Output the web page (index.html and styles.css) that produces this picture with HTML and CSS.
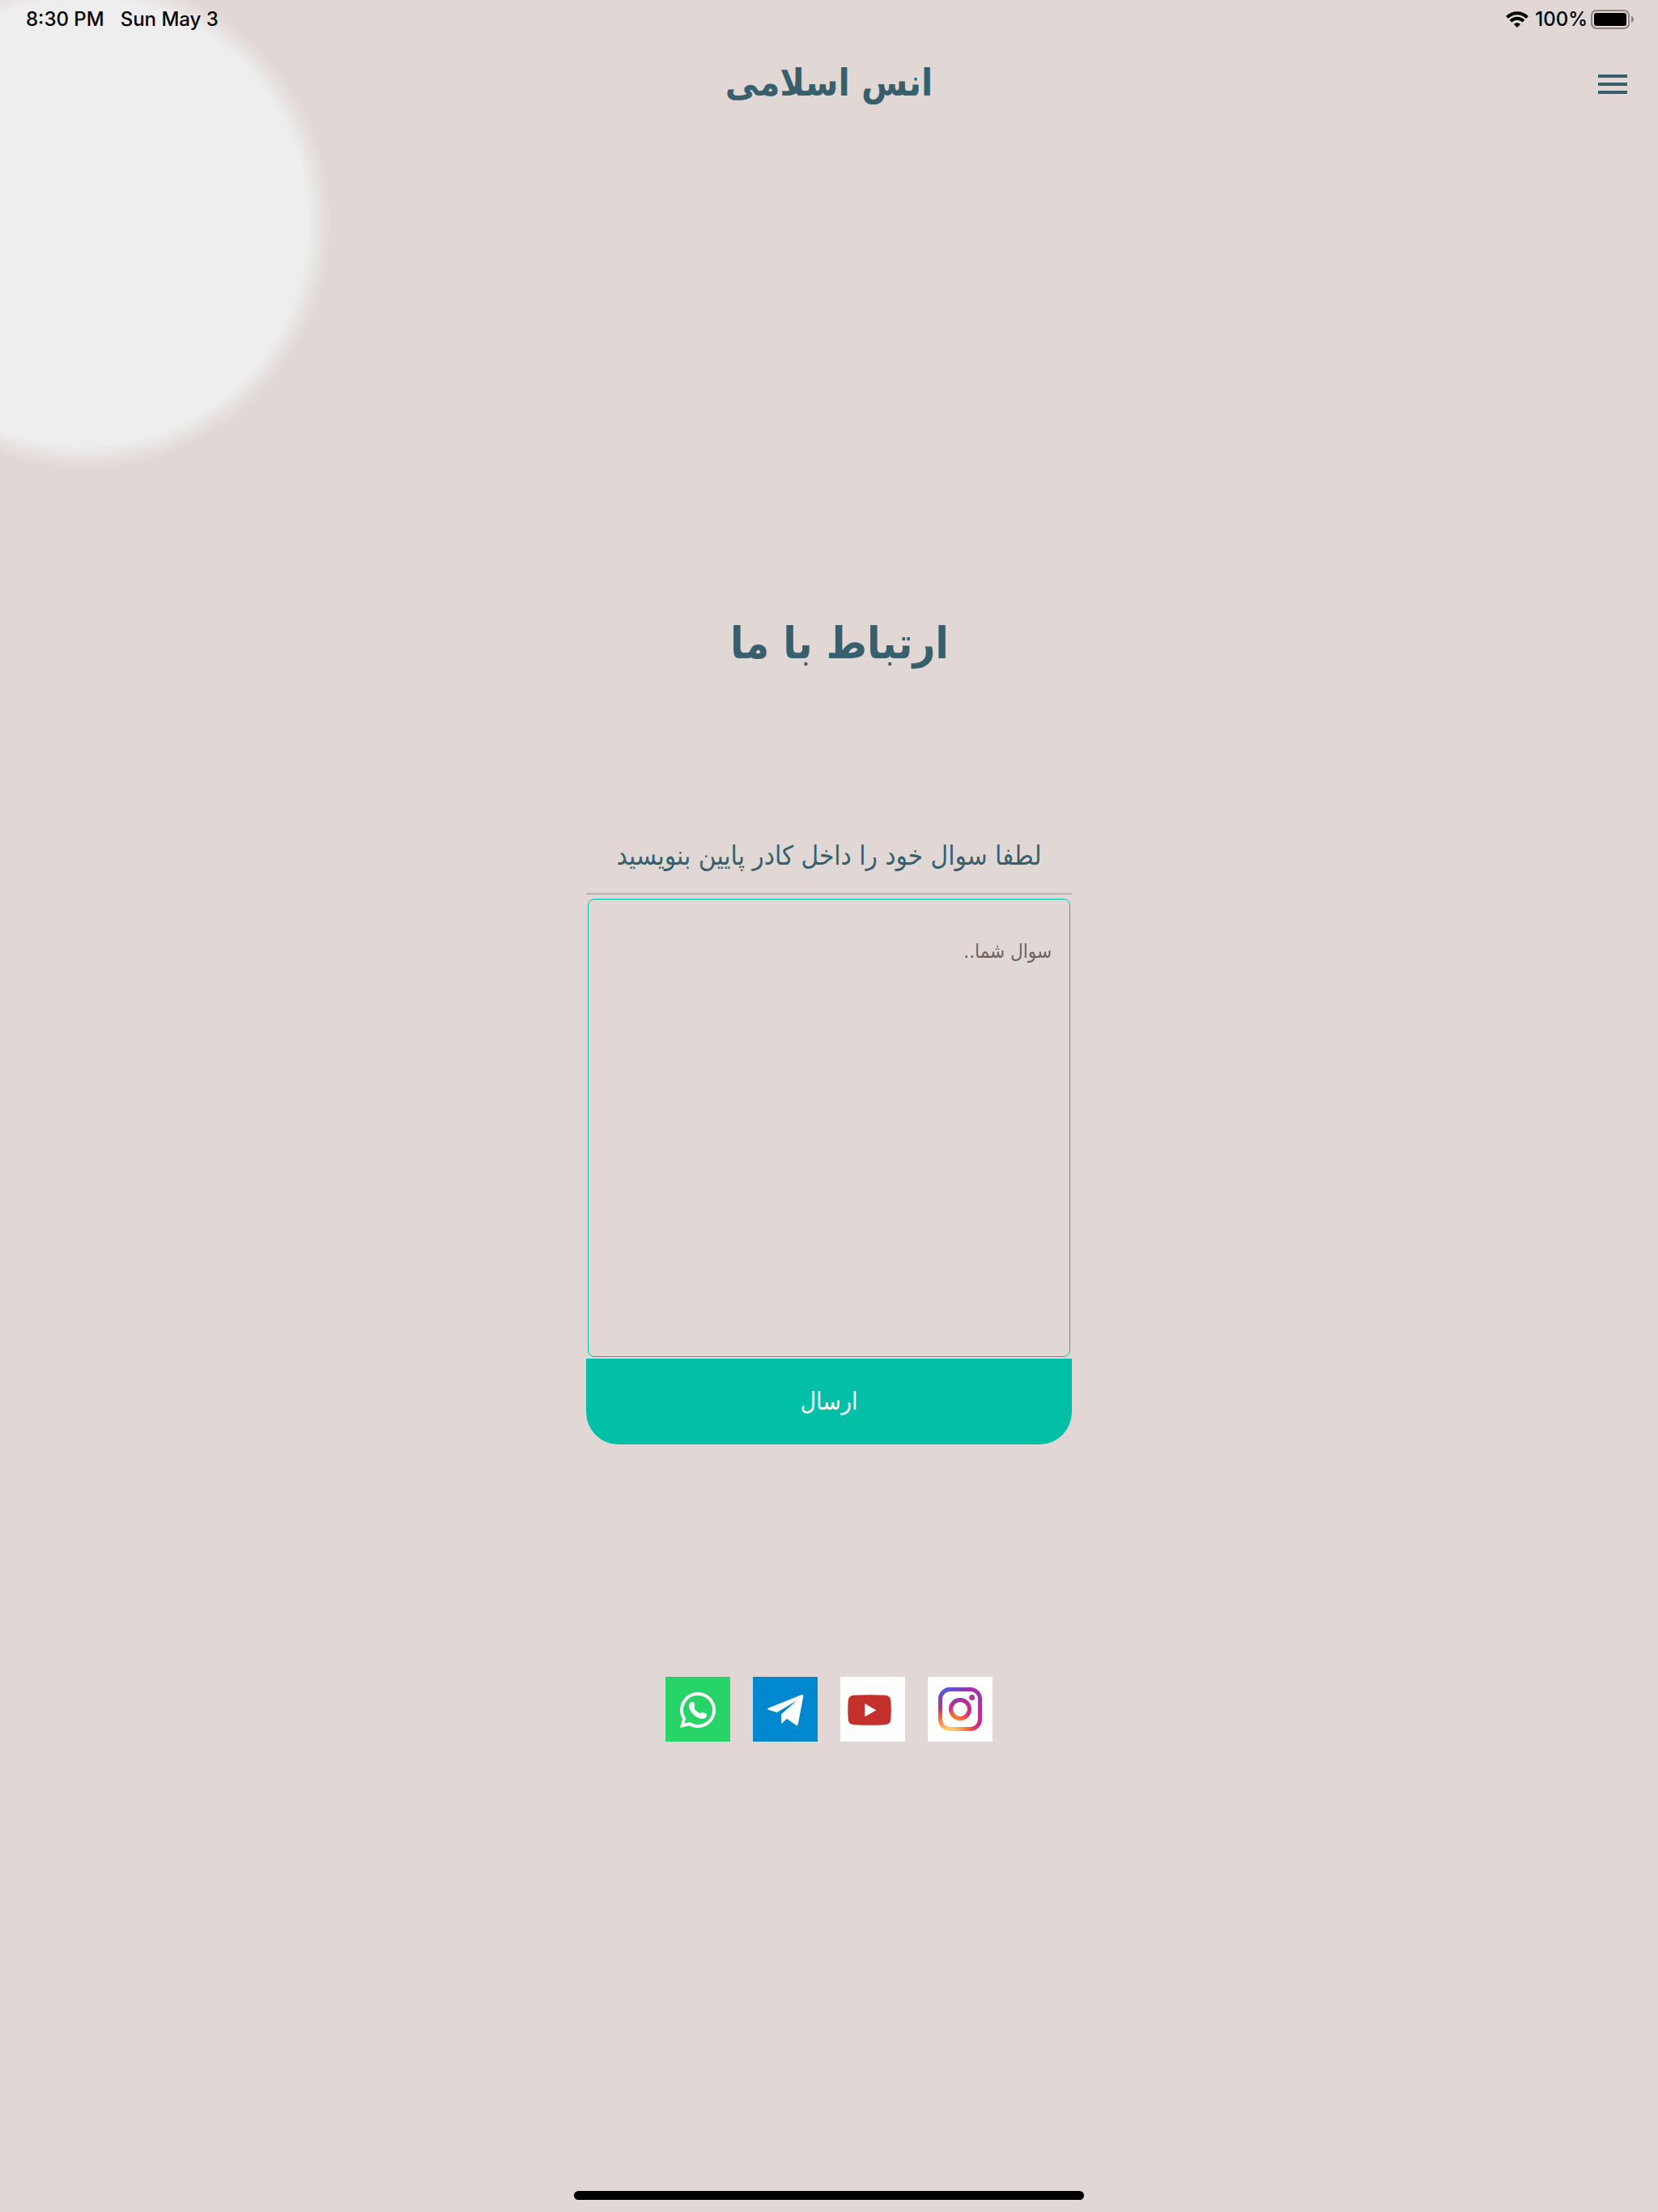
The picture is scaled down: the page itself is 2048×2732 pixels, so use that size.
FILE: index.html
```html
<!DOCTYPE html>
<html lang="fa" dir="rtl">
<head>
  <meta charset="utf-8">
  <meta name="viewport" content="width=device-width, initial-scale=1">
  <title>ارتباط با ما</title>
  <link rel="stylesheet" href="styles.css">
</head>
<body>
  <div class="status" dir="ltr">
    <div class="status-group status-clock">
      <span>8:30 PM</span>
      <span>Sun May 3</span>
    </div>
    <div class="status-group">
      <svg class="wifi" viewBox="0 0 28 20" aria-hidden="true">
        <g fill="none" stroke="#000" stroke-width="4">
          <path d="M1.500 7.500C8.500 .4 19.500 .4 26.500 7.500"/>
          <path d="M6 12.200C10.500 7.700 17.500 7.700 22 12.200"/>
        </g>
        <path d="M14 20L9.800 15.700C12 13.600 16 13.600 18.200 15.700Z"/>
      </svg>
      <span class="level">100%</span>
      <svg class="battery" viewBox="0 0 53 24" aria-hidden="true">
        <rect x="1" y="1" width="46" height="22" rx="6" fill="none" stroke="#8c8583" stroke-width="2"/>
        <rect x="4" y="4" width="40" height="16" rx="3"/>
        <path d="M50 8C54 9 54 15 50 16Z" fill="#8c8583"/>
      </svg>
    </div>
  </div>

  <header class="nav">
    <button class="menu" type="button" aria-label="منو"><i></i><i></i><i></i></button>
    <p class="brand">انس اسلامی</p>
  </header>

  <main class="content">
    <h1 class="heading">ارتباط با ما</h1>
    <form class="ask">
      <label class="ask-label" for="question">لطفا سوال خود را داخل کادر پایین بنویسید</label>
      <textarea class="ask-box" id="question" placeholder="سوال شما.."></textarea>
      <button class="send" type="submit">ارسال</button>
    </form>
    <nav class="social" dir="ltr">
      <a class="tile whatsapp" href="#whatsapp" aria-label="WhatsApp">
        <svg viewBox="0 0 80 80">
          <path fill="#fff" fill-rule="evenodd" d="M40 19A22 22 0 1 1 29.500 60.300L18 63L21 52A22 22 0 0 1 40 19ZM40 23A18 18 0 0 0 24.600 50.300L25.300 51.500L23.400 57.500L30 55.900L31.200 56.600A18 18 0 1 0 40 23Z"/>
          <path fill="#fff" d="M29 36C29 33 31 31 33.500 31C34.600 31 35 31.500 35.400 32.500L36.200 35.200C36.500 36.500 35.200 37.600 35.500 38.700C37 41.300 39.500 43.600 42.400 44.900C43.700 45.100 44.600 43.600 46 43.700L50 45.500C51.200 46 51.300 46.600 51 48C50.400 50.400 48.300 52 45.700 51.900C37.500 51.500 29.500 43.500 29 36Z"/>
        </svg>
      </a>
      <a class="tile telegram" href="#telegram" aria-label="Telegram">
        <svg viewBox="0 0 80 80">
          <path fill="#fff" d="M19.300 38.400L60 22.200C61.500 21.700 62.500 22.500 62.300 24L55.800 58.200C55.500 59.900 54.400 60.400 53 59.500L41.800 51.700L36.500 57C35.700 57.700 35 57.500 35 56.400V46.300L54.300 29.300L29.700 44L19.300 40.800C17.900 40.300 17.900 39 19.300 38.400Z"/>
        </svg>
      </a>
      <a class="tile" href="#youtube" aria-label="YouTube">
        <svg viewBox="0 0 80 80">
          <path fill="#c4302b" d="M17 22.800C29 22 43 22 55 22.800C60 23.200 62 25.500 62.300 30C62.900 37 62.900 45 62.300 52C62 56.500 60 58.800 55 59.200C43 60 29 60 17 59.200C12 58.800 10 56.500 9.700 52C9.100 45 9.100 37 9.700 30C10 25.500 12 23.200 17 22.800Z"/>
          <path fill="#fff" d="M30.300 33L44.300 41.300L30.300 49.300Z"/>
        </svg>
      </a>
      <a class="tile" href="#instagram" aria-label="Instagram">
        <svg viewBox="0 0 80 80">
          <defs>
            <radialGradient id="warm" gradientUnits="userSpaceOnUse" cx="27" cy="71" r="54">
              <stop offset="0" stop-color="#ffdd7a"/>
              <stop offset=".15" stop-color="#fdc766"/>
              <stop offset=".45" stop-color="#f9672f"/>
              <stop offset=".62" stop-color="#dc2b79"/>
              <stop offset="1" stop-color="#a233ad"/>
            </radialGradient>
            <radialGradient id="cool" gradientUnits="userSpaceOnUse" cx="20" cy="12" r="36">
              <stop offset="0" stop-color="#3f6bdc"/>
              <stop offset="1" stop-color="#6a35c0" stop-opacity="0"/>
            </radialGradient>
            <g id="camera">
              <rect x="15.500" y="15.500" width="49" height="49" rx="12"/>
              <circle cx="40" cy="40" r="11.500"/>
            </g>
          </defs>
          <use href="#camera" fill="none" stroke="url(#warm)" stroke-width="5"/>
          <use href="#camera" fill="none" stroke="url(#cool)" stroke-width="5"/>
          <circle cx="54.600" cy="25.400" r="3.500" fill="#a93aa6"/>
        </svg>
      </a>
    </nav>
  </main>

  <div class="home-bar"></div>
</body>
</html>
```
FILE: styles.css
```css
* {
  box-sizing: border-box;
}

body {
  display: flex;
  flex-direction: column;
  min-height: 100vh;
  margin: 0;
  color: #38606c;
  background: radial-gradient(circle at 104px 274px, #eee 276px, #e6e1df 292px, #e1d8d5 306px) #e1d8d5;
  font-family: "DejaVu Sans Condensed", "DejaVu Sans", sans-serif;
}

.status {
  display: flex;
  justify-content: space-between;
  height: 48px;
  padding: 0 30px 0 32px;
  color: #000;
  font: 500 24px/48px Inter, sans-serif;
}

.status-group {
  display: flex;
  align-items: center;
}

.status-clock {
  gap: 20px;
}

.wifi {
  width: 28px;
  height: 20px;
}

.level {
  margin: 0 4px 0 8px;
}

.battery {
  width: 53px;
  height: 24px;
}

.nav {
  display: grid;
  grid-template-columns: 1fr auto 1fr;
  align-items: center;
  height: 112px;
  padding: 0 38px;
}

.menu {
  display: grid;
  justify-self: start;
  gap: 6px;
  width: 36px;
  padding: 0;
  border: 0;
  background: none;
}

.menu i {
  height: 4px;
  background: #38606c;
}

.brand {
  margin: 0;
  padding-bottom: 4px;
  font-size: 46px;
  font-weight: 700;
  line-height: 64px;
}

.content {
  display: flex;
  flex: 1;
  flex-direction: column;
  align-items: center;
  padding: 591px 24px 0;
}

.heading {
  margin: 0;
  padding-inline-end: 26px;
  font-size: 54px;
  font-weight: 700;
  line-height: 88px;
}

.ask {
  display: flex;
  flex-direction: column;
  width: 100%;
  max-width: 600px;
  margin-top: 176px;
}

.ask-label {
  padding-bottom: 4px;
  border-bottom: 2px solid #bbb3b1;
  font-size: 33px;
  line-height: 84px;
  text-align: center;
}

.ask-box {
  height: 566px;
  margin: 5px 2px 2px;
  padding: 44px 22px;
  border: 1px solid #02c0a8;
  border-radius: 8px;
  background: none;
  color: #38606c;
  font-family: inherit;
  font-size: 24px;
  line-height: 40px;
  resize: none;
}

.ask-box::placeholder {
  color: #6b6462;
}

.send {
  height: 106px;
  border: 0;
  border-radius: 0 0 40px 40px;
  background: #02c0a8;
  color: #fff;
  font-family: inherit;
  font-size: 30px;
  line-height: 40px;
}

.social {
  display: flex;
  gap: 28px;
  margin-top: 287px;
}

.tile {
  width: 80px;
  height: 80px;
  background: #fff;
}

.tile svg {
  display: block;
}

.whatsapp {
  background: #27d467;
}

.telegram {
  background: #0088cf;
}

.home-bar {
  align-self: center;
  width: 630px;
  max-width: 60%;
  height: 11px;
  margin-bottom: 15px;
  border-radius: 6px;
  background: #000;
}
```
